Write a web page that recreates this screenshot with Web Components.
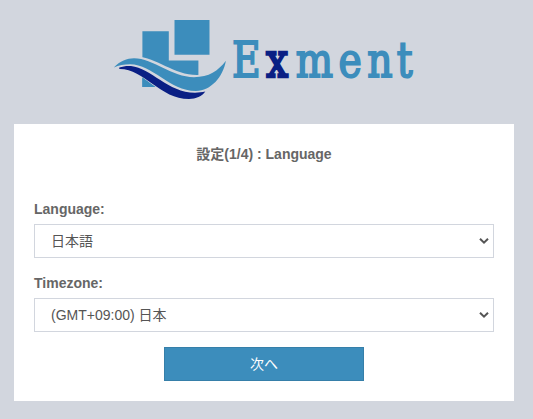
<!DOCTYPE html>
<html lang="ja">
<head>
<meta charset="utf-8">
<title>Exment</title>
<style>
body{margin:0;background:#d2d6de;min-height:419px;overflow:hidden;color:#666;font:14px/20px "Liberation Sans","Noto Sans CJK JP",sans-serif}
</style>
</head>
<body>
<setup-page>
  <exment-logo slot="logo"></exment-logo>
  <setup-card heading="設定(1/4) : Language">
    <select-field label="Language:" value="日本語"></select-field>
    <select-field label="Timezone:" value="(GMT+09:00) 日本"></select-field>
    <primary-button>次へ</primary-button>
  </setup-card>
</setup-page>
<script>
const define = (name, html, init) => customElements.define(name, class extends HTMLElement {
  constructor() {
    super();
    this.attachShadow({mode: 'open'}).innerHTML = html;
  }
  connectedCallback() { if (init) init(this, this.shadowRoot); }
});

define('setup-page', `
<style>
:host{display:flex;flex-direction:column;width:500px;margin-left:14px}
header{height:124px}
</style>
<header><slot name="logo"></slot></header>
<slot></slot>`);

define('exment-logo', `
<style>:host{display:block;height:124px}svg{display:block;margin-left:90px}</style>
<svg width="320" height="124" viewBox="104 0 320 124" role="img">
  <path fill="#3c8dbc" d="M142.400 31.300h26.400v29.200h29.600v26.400h-56z"/>
  <path fill="#3c8dbc" d="M174.500 20h35v34.700h-35z"/>
  <path fill="#d2d6de" d="M113 66C121 59 127 56.500 136 56.500C157 57.500 174 75 197 75C210 75 219 69 226 60L218 80C213 88 206 94 200 96L172 97L155.500 87.200L142.400 77.500L119 68z"/>
  <path fill="#3c8dbc" d="M142.400 77.700L155.500 86.900H142.400z"/>
  <path fill="#3c8dbc" d="M113.800 67.500C120 61 127 58.300 134 58.300C153 58.300 172 77.200 194 77.200C209 77.200 218 71 225.900 60.800C223 77 211 90.900 196 90.900C169 90.900 153 64.200 130 64.200C124 64.200 119 65.300 113.800 67.500z"/>
  <path fill="#0a1f84" d="M119.300 67.500C123 66.200 127 65.600 131 66C151 68 168 92.700 195 92.700C199 92.700 202 92.400 205.300 91.600C202 96.500 196 99 189 99C160 99 144 68.500 119.300 68.900z"/>
  <text transform="translate(0 77.200) scale(.82 1)" font-family="DejaVu Serif" font-size="48" fill="#3c8dbc" stroke="#3c8dbc" stroke-width="2" x="283 324.300 360.700 412.800 448 484" y="0">E<tspan fill="#0a1f84" stroke="#0a1f84" stroke-width="2.400">x</tspan>ment</text>
</svg>`);

define('setup-card', `
<style>
:host{display:flex;flex-direction:column;box-sizing:border-box;height:277px;background:#fff;padding:20px 20px 0}
h1{margin:0 0 35px;font:bold 14px/20px "Liberation Sans","Noto Sans CJK JP",sans-serif;text-align:center}
</style>
<h1></h1><slot></slot>`, (el, root) => {
  root.querySelector('h1').textContent = el.getAttribute('heading');
});

define('select-field', `
<style>
:host{display:block;height:59px;margin-bottom:15px}
.label{height:20px;font-weight:700;margin-bottom:5px}
.box{display:flex;align-items:center;justify-content:space-between;box-sizing:border-box;height:34px;border:1px solid #d2d6de;padding:0 4px 0 16px;color:#555}
svg{display:block}
</style>
<div class="label"></div>
<div class="box"><span></span><svg width="10" height="8" viewBox="0 0 10 8"><path d="M1 1.700L5 5.700L9 1.700" fill="none" stroke="#555" stroke-width="2"/></svg></div>`, (el, root) => {
  root.querySelector('.label').textContent = el.getAttribute('label');
  root.querySelector('span').textContent = el.getAttribute('value');
});

define('primary-button', `
<style>
:host{display:block;align-self:center}
button{display:block;box-sizing:border-box;width:200px;height:34px;padding:0;border:1px solid #367fa9;border-radius:0;background:#3c8dbc;color:#fff;font:14px/20px "Liberation Sans","Noto Sans CJK JP",sans-serif}
</style>
<button type="button"><slot></slot></button>`);
</script>
</body>
</html>
